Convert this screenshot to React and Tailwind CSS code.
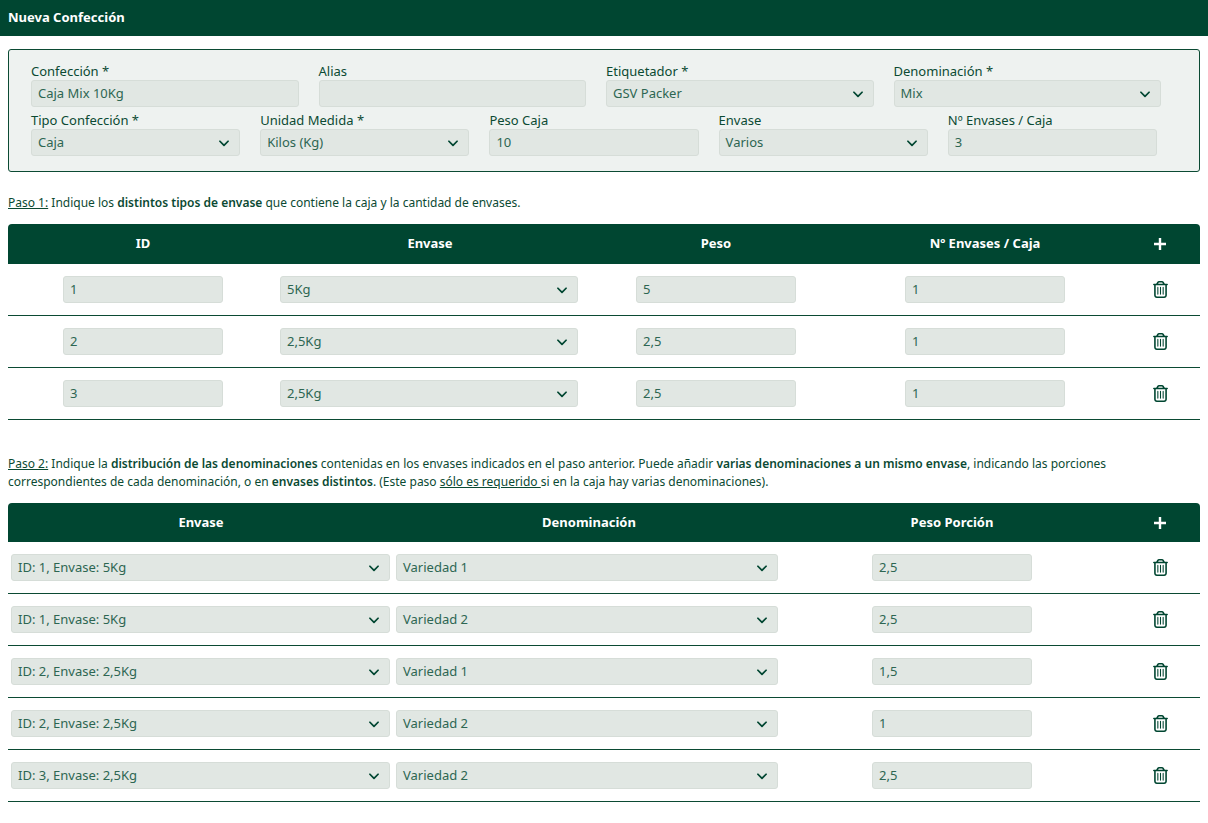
import { FaRegTrashCan } from "react-icons/fa6";

const G = "#004631";

function Chevron() {
  return (
    <svg width="14" height="14" viewBox="0 0 24 24" fill="none" stroke={G} strokeWidth="3" strokeLinecap="round" strokeLinejoin="round">
      <path d="M5 9l7 7 7-7" />
    </svg>
  );
}

function Input({ value, className = "" }) {
  return (
    <div className={`flex h-[27px] items-center rounded-[3px] border border-[#d6ddd8] bg-[#e1e7e3] px-[6px] text-[13px] text-[#2d6652] ${className}`}>
      {value}
    </div>
  );
}

function Select({ value, className = "" }) {
  return (
    <div className={`flex h-[27px] items-center justify-between rounded-[3px] border border-[#d6ddd8] bg-[#e1e7e3] pl-[6px] pr-[8px] text-[13px] text-[#2d6652] ${className}`}>
      <span>{value}</span>
      <Chevron />
    </div>
  );
}

function Field({ label, children }) {
  return (
    <div className="flex flex-col">
      <label className="mb-[1px] text-[13px] leading-[15px] text-[#0b4a33]">{label}</label>
      {children}
    </div>
  );
}

function Trash() {
  return <FaRegTrashCan size={17} color={G} />;
}

function Plus() {
  return (
    <svg width="14" height="14" viewBox="0 0 14 14"><path d="M7 1v12M1 7h12" stroke="white" strokeWidth="2.4" /></svg>
  );
}

const rows1 = [
  ["1", "5Kg", "5", "1"],
  ["2", "2,5Kg", "2,5", "1"],
  ["3", "2,5Kg", "2,5", "1"],
];
const rows2 = [
  ["ID: 1, Envase: 5Kg", "Variedad 1", "2,5"],
  ["ID: 1, Envase: 5Kg", "Variedad 2", "2,5"],
  ["ID: 2, Envase: 2,5Kg", "Variedad 1", "1,5"],
  ["ID: 2, Envase: 2,5Kg", "Variedad 2", "1"],
  ["ID: 3, Envase: 2,5Kg", "Variedad 2", "2,5"],
];

export default function App() {
  return (
    <div className="min-h-[823px] bg-white pb-4 font-['Open_Sans',sans-serif] text-[#0b4a33]">
      <div className="flex h-[36px] items-center bg-[#004631] px-[8px] text-[13px] font-bold text-white">Nueva Confección</div>

      <div className="mx-[8px] mt-[13px] rounded-[3px] border border-[#0b4a33] bg-[#eef2f0] px-[22px] pb-[15px] pt-[14px]">
        <div className="grid grid-cols-4 gap-x-[20px] pr-[16px]">
          <Field label="Confección *"><Input value="Caja Mix 10Kg" /></Field>
          <Field label="Alias"><Input value="" /></Field>
          <Field label="Etiquetador *"><Select value="GSV Packer" /></Field>
          <Field label="Denominación *"><Select value="Mix" /></Field>
        </div>
        <div className="mt-[6px] grid grid-cols-5 gap-x-[20px] pr-[20px]">
          <Field label="Tipo Confección *"><Select value="Caja" /></Field>
          <Field label="Unidad Medida *"><Select value="Kilos (Kg)" /></Field>
          <Field label="Peso Caja"><Input value="10" /></Field>
          <Field label="Envase"><Select value="Varios" /></Field>
          <Field label="Nº Envases / Caja"><Input value="3" /></Field>
        </div>
      </div>

      <p className="mx-[8px] mt-[22px] text-[12px] leading-[18px] text-[#0b4a33]">
        <span className="underline">Paso 1:</span> Indique los <b className="font-semibold">distintos tipos de envase</b> que contiene la caja y la cantidad de envases.
      </p>

      <div className="mx-[8px] mt-[12px]">
        <div className="grid h-[40px] grid-cols-[270px_304px_268px_270px_1fr] items-center rounded-t-[4px] bg-[#004631] text-[13px] font-bold text-white">
          <div className="text-center">ID</div>
          <div className="text-center">Envase</div>
          <div className="text-center">Peso</div>
          <div className="text-center">Nº Envases / Caja</div>
          <div className="flex justify-center"><Plus /></div>
        </div>
        {rows1.map((r, i) => (
          <div key={i} className="grid h-[52px] grid-cols-[270px_304px_268px_270px_1fr] items-center border-b border-[#0b4a33]">
            <div className="flex justify-center"><Input value={r[0]} className="w-[160px]" /></div>
            <div className="pl-[2px] pr-[4px]"><Select value={r[1]} /></div>
            <div className="flex justify-center"><Input value={r[2]} className="w-[160px]" /></div>
            <div className="flex justify-center"><Input value={r[3]} className="w-[160px]" /></div>
            <div className="flex justify-center"><Trash /></div>
          </div>
        ))}
      </div>

      <p className="mx-[8px] mt-[35px] text-[12px] leading-[18px] text-[#0b4a33]">
        <span className="underline">Paso 2:</span> Indique la <b className="font-semibold">distribución de las denominaciones</b> contenidas en los envases indicados en el paso anterior. Puede añadir <b className="font-semibold">varias denominaciones a un mismo envase</b>, indicando las porciones correspondientes de cada denominación, o en <b className="font-semibold">envases distintos</b>. (Este paso <span className="underline">sólo es requerido </span>si en la caja hay varias denominaciones).
      </p>

      <div className="mx-[8px] mt-[12px]">
        <div className="grid h-[39px] grid-cols-[386px_390px_336px_1fr] items-center rounded-t-[4px] bg-[#004631] text-[13px] font-bold text-white">
          <div className="text-center">Envase</div>
          <div className="text-center">Denominación</div>
          <div className="text-center">Peso Porción</div>
          <div className="flex justify-center"><Plus /></div>
        </div>
        {rows2.map((r, i) => (
          <div key={i} className="grid h-[52px] grid-cols-[386px_390px_336px_1fr] items-center border-b border-[#0b4a33]">
            <div className="pl-[3px] pr-[4px]"><Select value={r[0]} /></div>
            <div className="pl-[2px] pr-[6px]"><Select value={r[1]} /></div>
            <div className="flex justify-center"><Input value={r[2]} className="w-[160px]" /></div>
            <div className="flex justify-center"><Trash /></div>
          </div>
        ))}
      </div>
    </div>
  );
}
